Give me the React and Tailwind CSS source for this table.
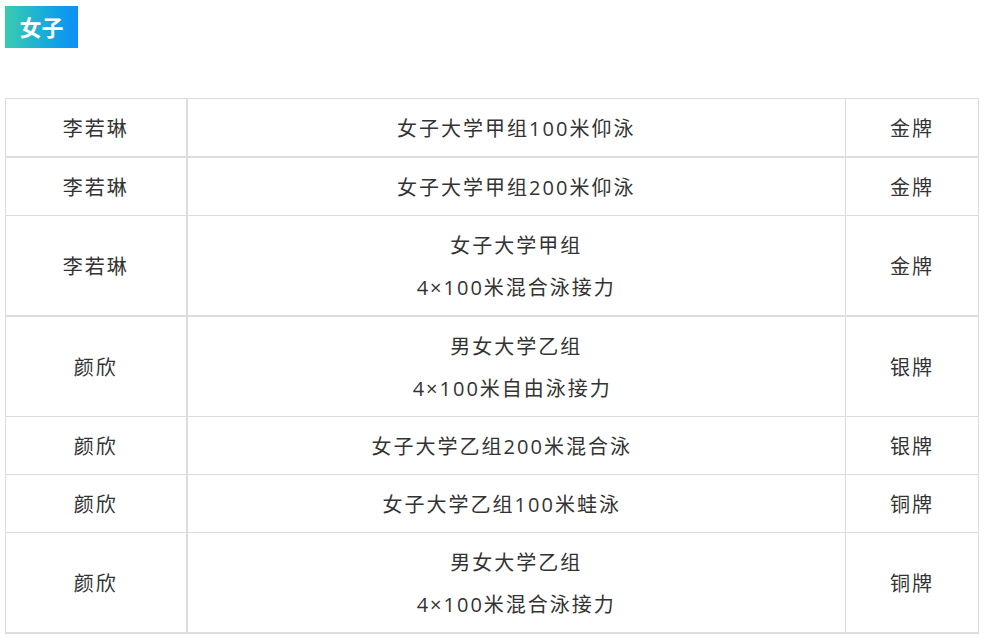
import React from 'react';

const ROWS = [
  { name: '李若琳', event: [['女子大学甲组100米仰泳']], medal: '金牌', thick: true },
  { name: '李若琳', event: [['女子大学甲组200米仰泳']], medal: '金牌' },
  { name: '李若琳', event: [['女子大学甲组'], ['4×100米混合泳接力']], medal: '金牌', thick: true },
  { name: '颜欣', event: [['男女大学乙组'], ['4×100米自由泳接力', 'pr-[8px]']], medal: '银牌' },
  { name: '颜欣', event: [['女子大学乙组200米混合泳', 'pr-[29px]']], medal: '银牌' },
  { name: '颜欣', event: [['女子大学乙组100米蛙泳', 'pr-[29px]']], medal: '铜牌' },
  { name: '颜欣', event: [['男女大学乙组'], ['4×100米混合泳接力']], medal: '铜牌', thick: true },
];

const App = () => {
  return (
    <div
      className="min-h-screen bg-white px-[5px] pt-[6px] text-[#333]"
      style={{ fontFamily: '"Open Sans", "Noto Sans CJK SC", sans-serif' }}
    >
      <div className="w-[73px] h-[42px] flex items-center justify-center bg-gradient-to-r from-[#3acbae] to-[#118df7] text-white text-[22px] font-bold">
        女子
      </div>

      <table className="mt-[50px] w-[973px] table-fixed border-collapse text-[20px] tracking-[2px]">
        <colgroup>
          <col className="w-[181px]" />
          <col className="w-[659px]" />
          <col className="w-[133px]" />
        </colgroup>
        <tbody>
          {ROWS.map((row, i) => {
            const cell = `border border-[#dddddd] text-center align-middle pt-[9px] pb-[6px] leading-[42px] ${row.thick ? 'border-b-2' : ''}`;
            return (
              <tr key={i}>
                <td className={`${cell} border-r-2`}>{row.name}</td>
                <td className={cell}>
                  {row.event.map(([line, pad]) => (
                    <div key={line} className={pad}>{line}</div>
                  ))}
                </td>
                <td className={cell}>{row.medal}</td>
              </tr>
            );
          })}
        </tbody>
      </table>
    </div>
  );
};

export default App;
